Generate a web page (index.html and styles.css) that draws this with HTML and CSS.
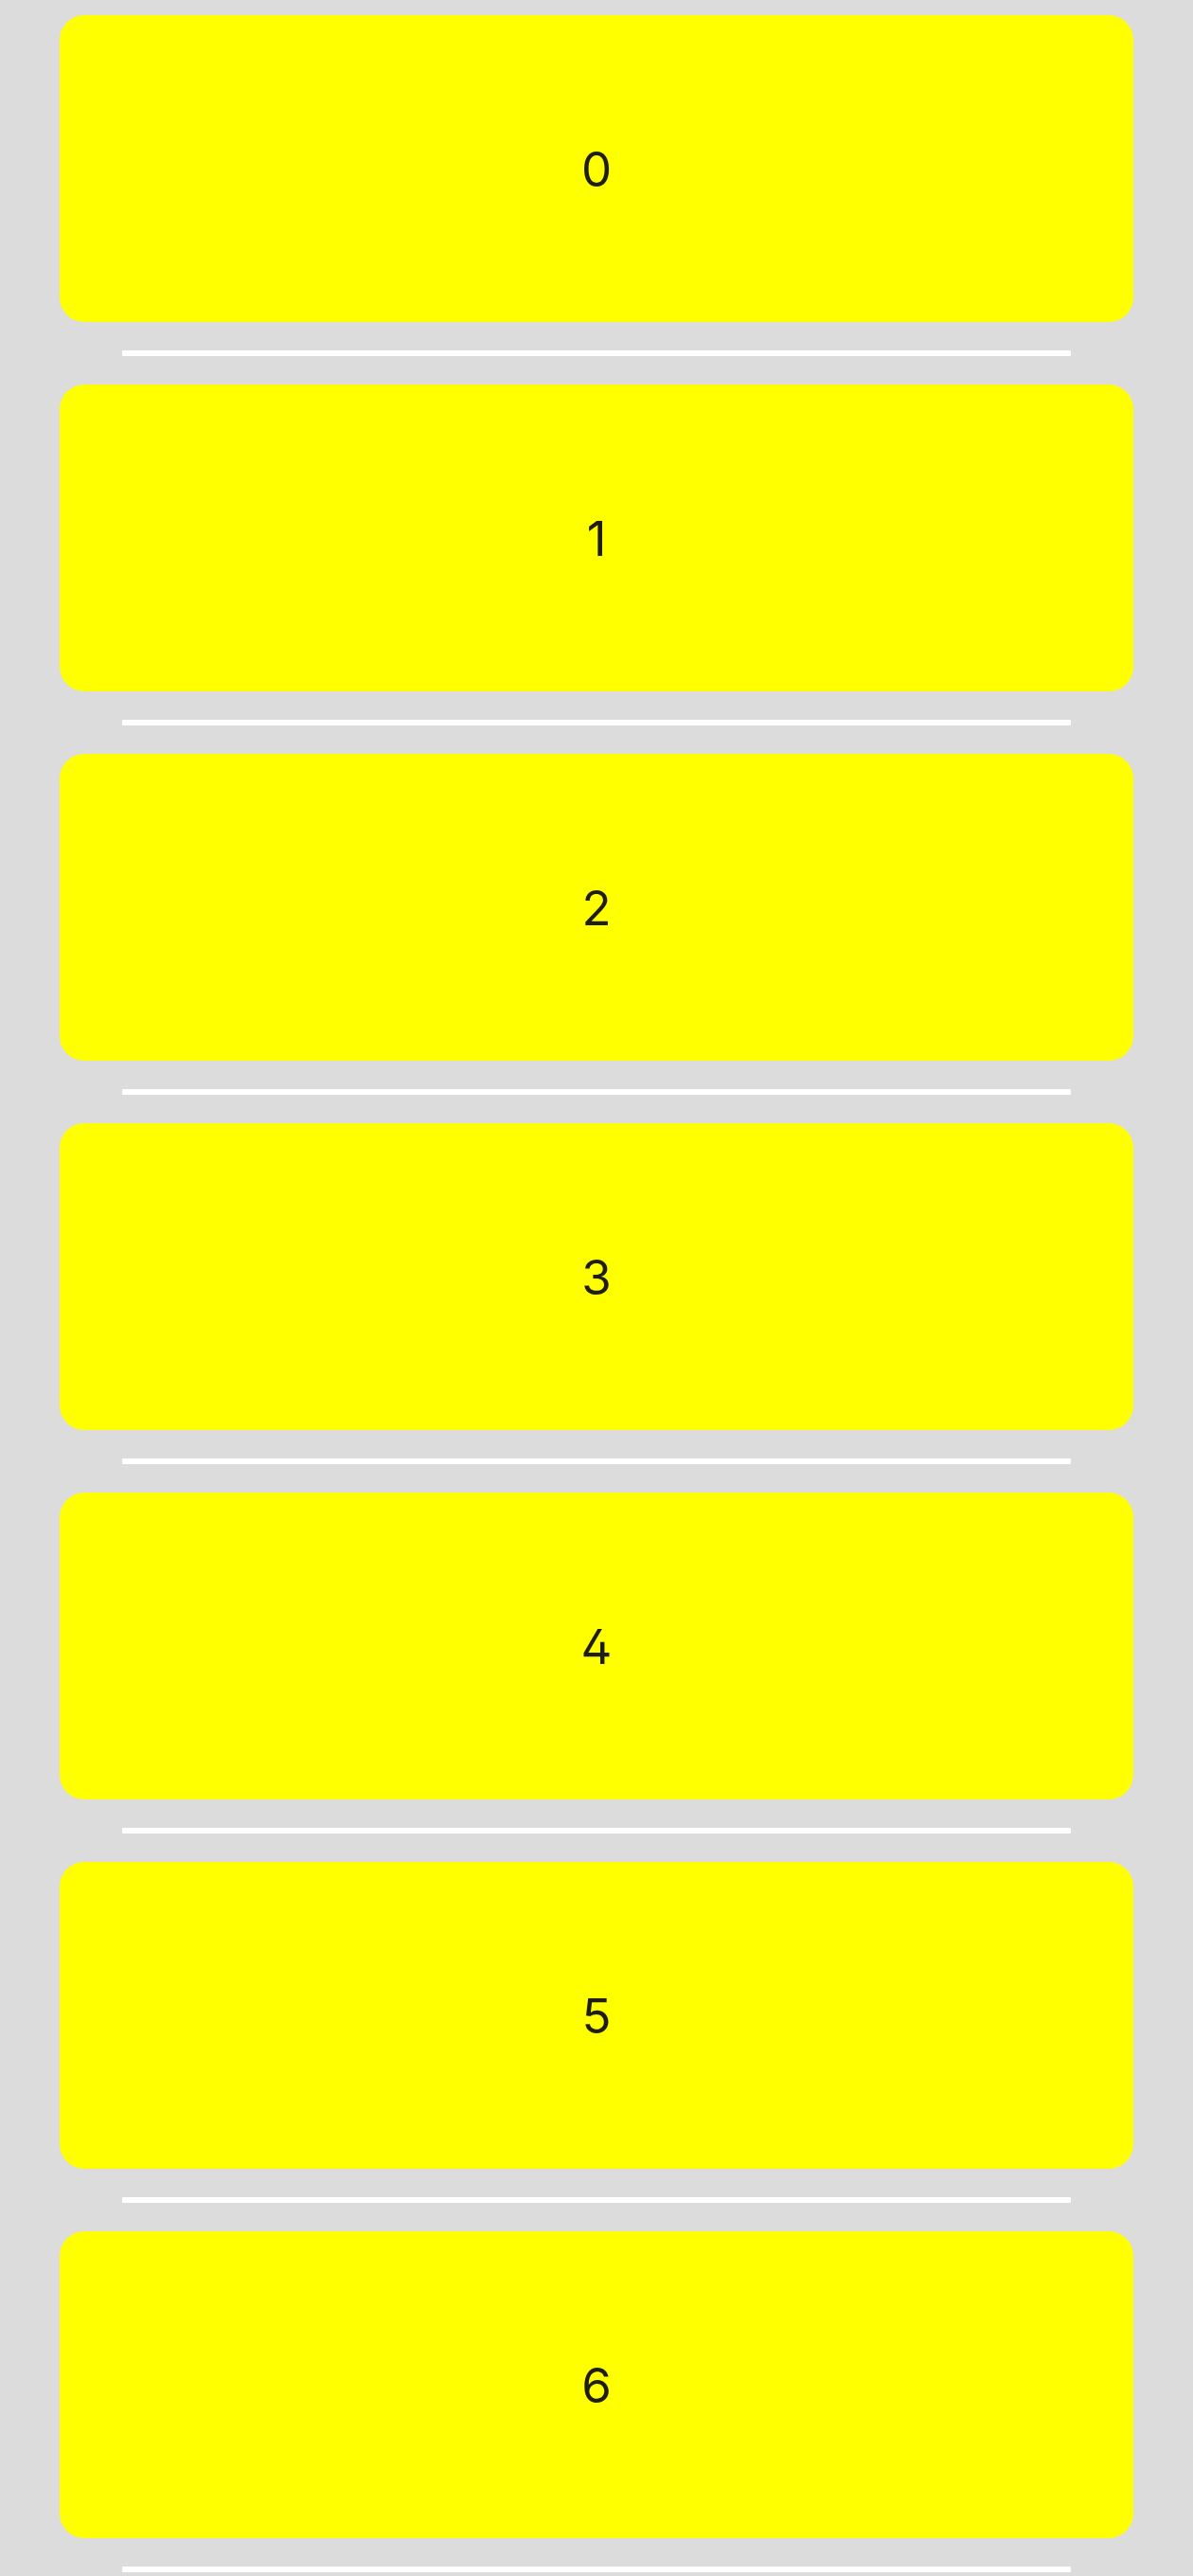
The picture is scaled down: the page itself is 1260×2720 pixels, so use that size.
FILE: index.html
```html
<!DOCTYPE html>
<html lang="en">
<head>
<meta charset="utf-8">
<title>List</title>
<link rel="stylesheet" href="styles.css">
</head>
<body>
<ul class="list">
  <li class="item"><div class="card">0</div><div class="divider"></div></li>
  <li class="item"><div class="card">1</div><div class="divider"></div></li>
  <li class="item"><div class="card">2</div><div class="divider"></div></li>
  <li class="item"><div class="card">3</div><div class="divider"></div></li>
  <li class="item"><div class="card">4</div><div class="divider"></div></li>
  <li class="item"><div class="card">5</div><div class="divider"></div></li>
  <li class="item"><div class="card">6</div><div class="divider"></div></li>
</ul>
</body>
</html>
```

FILE: styles.css
```css
html, body {
  margin: 0;
  padding: 0;
  background: #dcdcdc;
  height: 2720px;
  overflow: hidden;
}
.list {
  list-style: none;
  margin: 0;
  padding: 16px 63px 0;
  display: flex;
  flex-direction: column;
}
.item {
  display: flex;
  flex-direction: column;
  align-items: center;
}
.card {
  width: 100%;
  height: 324px;
  background: #ffff00;
  border-radius: 26px;
  display: flex;
  align-items: center;
  justify-content: center;
  font-family: Inter, Roboto, "Liberation Sans", sans-serif;
  font-feature-settings: "cv02" 1;
  font-size: 51px;
  font-weight: 400;
  color: #1e1e14;
  line-height: 1;
}
.divider {
  width: 1002px;
  height: 6px;
  margin: 30px 0;
  background: #ffffff;
  border-radius: 1px;
}
```
